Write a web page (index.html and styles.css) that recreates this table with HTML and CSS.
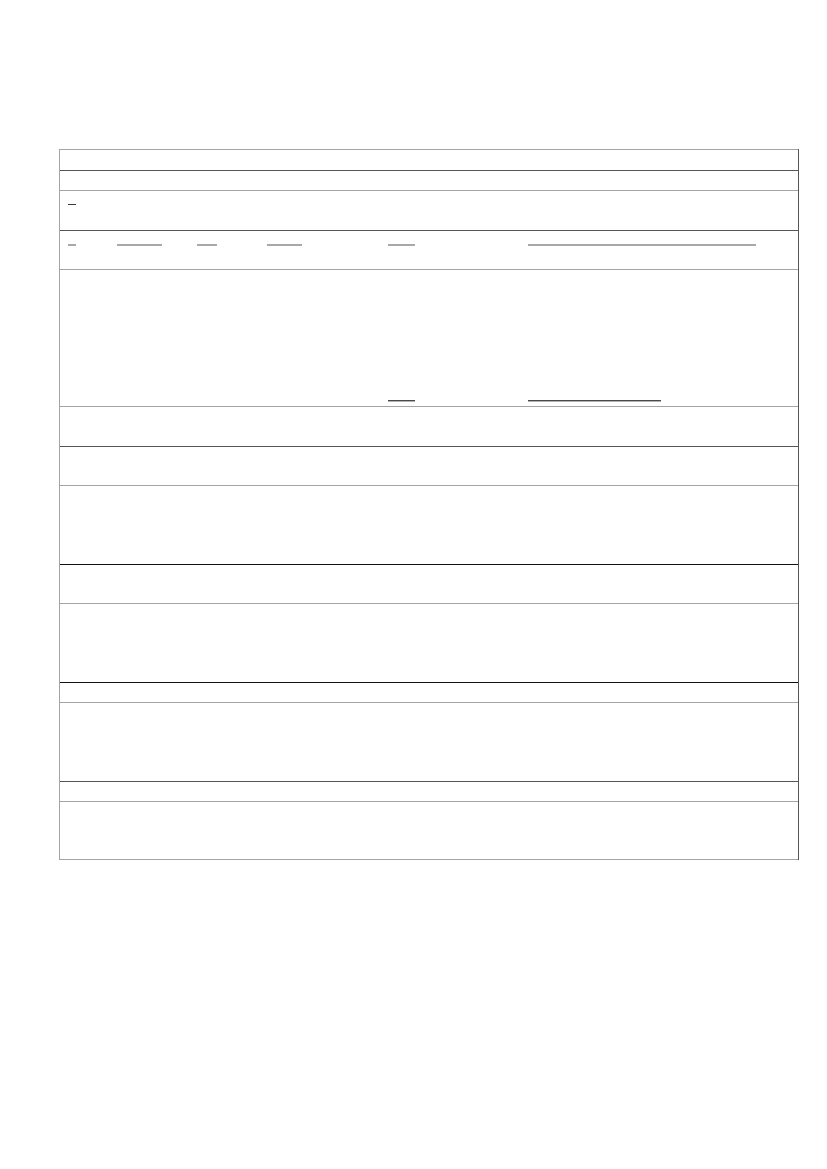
FILE: index.html
```html
<!DOCTYPE html>
<html lang="en">
<head>
<meta charset="utf-8">
<title>Table</title>
<link rel="stylesheet" href="styles.css">
</head>
<body>
<div class="sheet">
  <div class="row h21 top-light"><div class="c c1"></div><div class="c c2"></div><div class="c c3"></div><div class="c c4"></div><div class="c c5"></div><div class="c c6"></div></div>
  <div class="row h20 top-dark"><div class="c c1"></div><div class="c c2"></div><div class="c c3"></div><div class="c c4"></div><div class="c c5"></div><div class="c c6"></div></div>
  <div class="row h40 top-light"><div class="c c1"><span class="u dark w8"></span></div><div class="c c2"></div><div class="c c3"></div><div class="c c4"></div><div class="c c5"></div><div class="c c6"></div></div>
  <div class="row h39 top-dark"><div class="c c1"><span class="u light w8"></span></div><div class="c c2"><span class="u light w45"></span></div><div class="c c3"><span class="u light w20"></span></div><div class="c c4"><span class="u light w35"></span></div><div class="c c5"><span class="u light w27"></span></div><div class="c c6"><span class="u light w228"></span></div></div>
  <div class="row h137 top-light bottom"><div class="c c1"></div><div class="c c2"></div><div class="c c3"></div><div class="c c4"></div><div class="c c5"><span class="u dark2 w27"></span></div><div class="c c6"><span class="u dark2 w133"></span></div></div>
  <div class="row h40 top-light"><div class="c c1"></div><div class="c c2"></div><div class="c c3"></div><div class="c c4"></div><div class="c c5"></div><div class="c c6"></div></div>
  <div class="row h39 top-dark"><div class="c c1"></div><div class="c c2"></div><div class="c c3"></div><div class="c c4"></div><div class="c c5"></div><div class="c c6"></div></div>
  <div class="row h79 top-light"><div class="c c1"></div><div class="c c2"></div><div class="c c3"></div><div class="c c4"></div><div class="c c5"></div><div class="c c6"></div></div>
  <div class="row h39 top-black"><div class="c c1"></div><div class="c c2"></div><div class="c c3"></div><div class="c c4"></div><div class="c c5"></div><div class="c c6"></div></div>
  <div class="row h79 top-light"><div class="c c1"></div><div class="c c2"></div><div class="c c3"></div><div class="c c4"></div><div class="c c5"></div><div class="c c6"></div></div>
  <div class="row h20 top-black"><div class="c c1"></div><div class="c c2"></div><div class="c c3"></div><div class="c c4"></div><div class="c c5"></div><div class="c c6"></div></div>
  <div class="row h79 top-light"><div class="c c1"></div><div class="c c2"></div><div class="c c3"></div><div class="c c4"></div><div class="c c5"></div><div class="c c6"></div></div>
  <div class="row h20 top-dark"><div class="c c1"></div><div class="c c2"></div><div class="c c3"></div><div class="c c4"></div><div class="c c5"></div><div class="c c6"></div></div>
  <div class="row h59 top-light last"><div class="c c1"></div><div class="c c2"></div><div class="c c3"></div><div class="c c4"></div><div class="c c5"></div><div class="c c6"></div></div>
</div>
</body>
</html>
```

FILE: styles.css
```css
html, body {
  margin: 0;
  padding: 0;
  background: #ffffff;
  font-family: "Liberation Sans", Arial, sans-serif;
}

.sheet {
  box-sizing: border-box;
  width: 740px;
  margin: 149px 0 0 59px;
  border-left: 1px solid #a4a4a4;
  border-right: 1px solid #555555;
  display: flex;
  flex-direction: column;
}

.row {
  box-sizing: border-box;
  display: flex;
  border-top: 1px solid #a4a4a4;
}

.row.last {
  border-bottom: 1px solid #a4a4a4;
}

.top-light { border-top-color: #a4a4a4; }
.top-dark { border-top-color: #555555; }
.top-black { border-top-color: #111111; }

.h20 { height: 20px; }
.h21 { height: 21px; }
.h39 { height: 39px; }
.h40 { height: 40px; }
.h59 { height: 59px; }
.h79 { height: 79px; }
.h137 { height: 137px; }

.c {
  box-sizing: border-box;
  padding: 13px 0 0 8px;
  display: flex;
  align-items: flex-start;
}

.row.bottom .c {
  align-items: flex-end;
  padding: 0 0 5px 8px;
}

.c1 { width: 48px; }
.c2 { width: 81px; padding-left: 9px; }
.c3 { width: 70px; }
.c4 { width: 120px; }
.c5 { width: 140px; padding-left: 9px; }
.c6 { width: 279px; padding-left: 9px; }

.row.bottom .c5,
.row.bottom .c6 { padding-left: 9px; }

.u {
  display: block;
  height: 0;
}

.u.dark { border-bottom: 1px solid #3a3a3a; }
.u.light { border-bottom: 2px solid #a8a8a8; }
.u.dark2 {
  border-bottom: 1px solid #4a4a4a;
  box-shadow: 0 1px 0 #b0b0b0;
}

.w8 { width: 8px; }
.w20 { width: 20px; }
.w27 { width: 27px; }
.w35 { width: 35px; }
.w45 { width: 45px; }
.w133 { width: 133px; }
.w228 { width: 228px; }
```
